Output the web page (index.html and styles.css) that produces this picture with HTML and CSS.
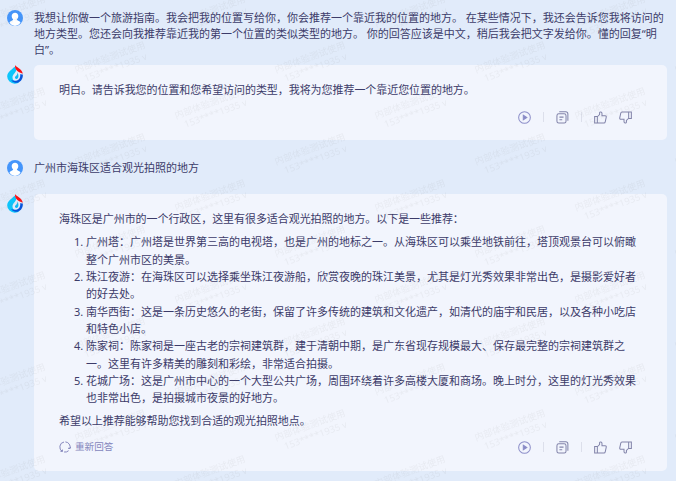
FILE: index.html
```html
<!DOCTYPE html>
<html lang="zh-CN">
<head>
<meta charset="utf-8">
<title>对话</title>
<link rel="stylesheet" href="styles.css">
</head>
<body>
<svg class="defs" width="0" height="0" aria-hidden="true">
  <symbol id="user" viewBox="0 0 16 16">
    <circle cx="8" cy="8" r="8" fill="#4495fb"/>
    <path d="M8 2.7c2 0 3.3 1.4 3.3 3.4 0 1.5-.6 2.7-1.5 3.5.2.9 1.7 1.2 2.9 1.9.5.3.7.8.7 1.4A7.9 7.9 0 0 1 8 16a7.9 7.9 0 0 1-5.4-3.1c0-.6.2-1.1.7-1.4 1.2-.7 2.7-1 2.9-1.9-.9-.8-1.5-2-1.5-3.5 0-2 1.3-3.4 3.3-3.4z" fill="#fff"/>
  </symbol>
  <symbol id="bot" viewBox="0 0 16 19">
    <path d="M7.3 1.8C5.600 4.600.2 6.500.2 11.400a7.500 7.500 0 0 0 7.600 7.300c2 0 3.600-.7 4.900-1.900-3.500.4-7.200-.8-7.200-4.300 0-2.900 3.100-4.700 3.700-6.900C9.500 4.200 8.300 2.700 7.300 1.800z" fill="#0cc5fb"/>
    <path d="M10.300 7.300c.6 1.800-.5 3-1.700 4-1.100 1-.8 2.500.7 2.600 2.500.2 2.800-3.600 1-6.600z" fill="#0cb9f6"/>
    <path d="M15.800 9.500c.5 4.700-2.900 8.700-7.500 8.200-2-.2-3.300-1-4.100-2.600 2.400 1.300 6.200 1 8-1.200 1.100-1.400 1.300-3.200.8-4.700z" fill="#0755dc"/>
    <path d="M8.200 0c.3 1.700 6.900 3.800 7.600 8.800-2.100-1-5.400-1.700-6.800-4.200C8.100 3.100 7.800 1.300 8.200 0z" fill="#fb1014"/>
  </symbol>
  <symbol id="play" viewBox="0 0 14 14">
    <circle cx="7" cy="7" r="6.300"/><path d="M5.700 4.600v4.800L9.500 7z" fill="currentColor"/>
  </symbol>
  <symbol id="copy" viewBox="0 0 14 14">
    <rect x="1" y="3" width="9.800" height="10" rx="2"/><path d="M3.500.9h7.100a2.200 2.200 0 0 1 2.200 2.200v7.500M3.700 6.600h4.400M3.700 9.300h3"/>
  </symbol>
  <symbol id="thumb" viewBox="0 0 14 14">
    <path d="M.7 5.900h2.900v7H.7zM3.600 6.200 6 3.800V2.200c0-1.700 2.600-1.600 2.600.4v2.500h3.400c.9 0 1.400.7 1.200 1.500l-1.100 5.100c-.2.8-.6 1.200-1.300 1.200H3.600"/>
  </symbol>
  <symbol id="retry" viewBox="0 0 12 12">
    <path d="M3.300 10.400A5.100 5.100 0 0 1 5 1M6.400.9a5.100 5.100 0 0 1 4.500 6.700M9.600 9.700a5.100 5.100 0 0 1-4.500 1.300M1.300 10.100l2 .4.200-1.900M9 7.200l1.900.4.800-1.700"/>
  </symbol>
</svg>

<main class="chat">
  <section class="message question">
    <svg class="avatar"><use href="#user"/></svg>
    <p class="prompt">我想让你做一个旅游指南。我会把我的位置写给你，你会推荐一个靠近我的位置的地方。 在某些情况下，我还会告诉您我将访问的<br>地方类型。您还会向我推荐靠近我的第一个位置的类似类型的地方。 你的回答应该是中文，稍后我会把文字发给你。懂的回复“明<br>白”。</p>
  </section>

  <section class="message answer">
    <svg class="logo"><use href="#bot"/></svg>
    <div class="card">
      <p class="short">明白。请告诉我您的位置和您希望访问的类型，我将为您推荐一个靠近您位置的地方。</p>
      <div class="footer">
        <div class="actions">
          <svg class="icon violet"><use href="#play"/></svg><i class="divider"></i>
          <svg class="icon"><use href="#copy"/></svg><i class="divider"></i>
          <svg class="icon"><use href="#thumb"/></svg>
          <svg class="icon down"><use href="#thumb"/></svg>
        </div>
      </div>
    </div>
  </section>

  <section class="message question second">
    <svg class="avatar"><use href="#user"/></svg>
    <p class="prompt">广州市海珠区适合观光拍照的地方</p>
  </section>

  <section class="message answer long">
    <svg class="logo"><use href="#bot"/></svg>
    <div class="card">
      <p class="short">海珠区是广州市的一个行政区，这里有很多适合观光拍照的地方。以下是一些推荐：</p>
      <ol>
        <li>广州塔：广州塔是世界第三高的电视塔，也是广州的地标之一。从海珠区可以乘坐地铁前往，塔顶观景台可以俯瞰<br>整个广州市区的美景。</li>
        <li>珠江夜游：在海珠区可以选择乘坐珠江夜游船，欣赏夜晚的珠江美景，尤其是灯光秀效果非常出色，是摄影爱好者<br>的好去处。</li>
        <li>南华西街：这是一条历史悠久的老街，保留了许多传统的建筑和文化遗产，如清代的庙宇和民居，以及各种小吃店<br>和特色小店。</li>
        <li>陈家祠：陈家祠是一座古老的宗祠建筑群，建于清朝中期，是广东省现存规模最大、保存最完整的宗祠建筑群之<br>一。这里有许多精美的雕刻和彩绘，非常适合拍摄。</li>
        <li>花城广场：这是广州市中心的一个大型公共广场，周围环绕着许多高楼大厦和商场。晚上时分，这里的灯光秀效果<br>也非常出色，是拍摄城市夜景的好地方。</li>
      </ol>
      <p class="short">希望以上推荐能够帮助您找到合适的观光拍照地点。</p>
      <div class="footer">
        <button class="retry"><svg class="retry-icon"><use href="#retry"/></svg>重新回答</button>
        <div class="actions">
          <svg class="icon violet"><use href="#play"/></svg><i class="divider"></i>
          <svg class="icon"><use href="#copy"/></svg><i class="divider"></i>
          <svg class="icon"><use href="#thumb"/></svg>
          <svg class="icon down"><use href="#thumb"/></svg>
        </div>
      </div>
    </div>
  </section>
</main>

<svg class="watermark" aria-hidden="true">
  <defs>
    <g id="mark"><text transform="rotate(-20)"><tspan x="0" y="0">内部体验测试使用</tspan><tspan x="6" y="11.5" class="phone">153****1935 v</tspan></text></g>
    <pattern id="tile" x="60" y="0" width="200" height="92" patternUnits="userSpaceOnUse">
      <use href="#mark" x="16" y="73"/>
      <use href="#mark" x="116" y="27"/>
      <use href="#mark" x="116" y="119"/>
    </pattern>
  </defs>
  <rect width="100%" height="100%" fill="url(#tile)"/>
</svg>
</body>
</html>
```

FILE: styles.css
```css
* { box-sizing: border-box; }
body {
  margin: 0;
  width: 676px;
  height: 481px;
  overflow: hidden;
  position: relative;
  background: #e1ebfa;
  color: #3c3b69;
  font: 11px/17.35px "Noto Sans", "Noto Sans CJK SC", sans-serif;
}
p { margin: 0; white-space: nowrap; }
.short { letter-spacing: -.06px; }
.defs { position: absolute; }
.chat { padding: 10px 9px 0 7px; }
.message { display: flex; align-items: flex-start; gap: 11px; }
.avatar { width: 16px; height: 16px; flex: none; }
.logo { width: 16px; height: 19px; flex: none; }
.prompt { line-height: 16px; }
.question { height: 55px; }
.second { margin-top: 20px; height: 34px; }
.card {
  flex: 1;
  height: 75px;
  padding: 16px 25px 0;
  border-radius: 5px;
  background: #f2f5fd;
}
.long .card { height: 277px; }
ol { margin: 6px 0 5px; padding-left: 27px; white-space: nowrap; }
.footer { display: flex; align-items: center; height: 14px; margin-top: 12px; }
.long .footer { margin-top: 11px; }
.actions { display: flex; align-items: center; margin-left: auto; margin-right: 10.5px; }
.icon {
  width: 13px;
  height: 13px;
  fill: none;
  stroke: #8284aa;
  stroke-width: 1.1;
  color: #8587c4;
}
.violet { stroke: #8d8fc9; }
.divider { width: 1px; height: 10px; margin: 0 12px; background: #dcdfeb; }
.down { margin-left: 11.5px; transform: rotate(180deg); }
.retry {
  display: flex;
  align-items: center;
  gap: 4px;
  padding: 0;
  border: 0;
  background: none;
  color: #8587bd;
  font: 9.6px/14px "Noto Sans", "Noto Sans CJK SC", sans-serif;
}
.retry-icon { width: 12px; height: 12px; fill: none; stroke: #8587bd; }
.watermark {
  position: absolute;
  inset: 0;
  width: 100%;
  height: 100%;
  pointer-events: none;
  fill: #777;
  fill-opacity: .085;
  font-size: 9.3px;
}
.watermark rect { fill-opacity: 1; }
.phone { font-size: 9.5px; }
```
